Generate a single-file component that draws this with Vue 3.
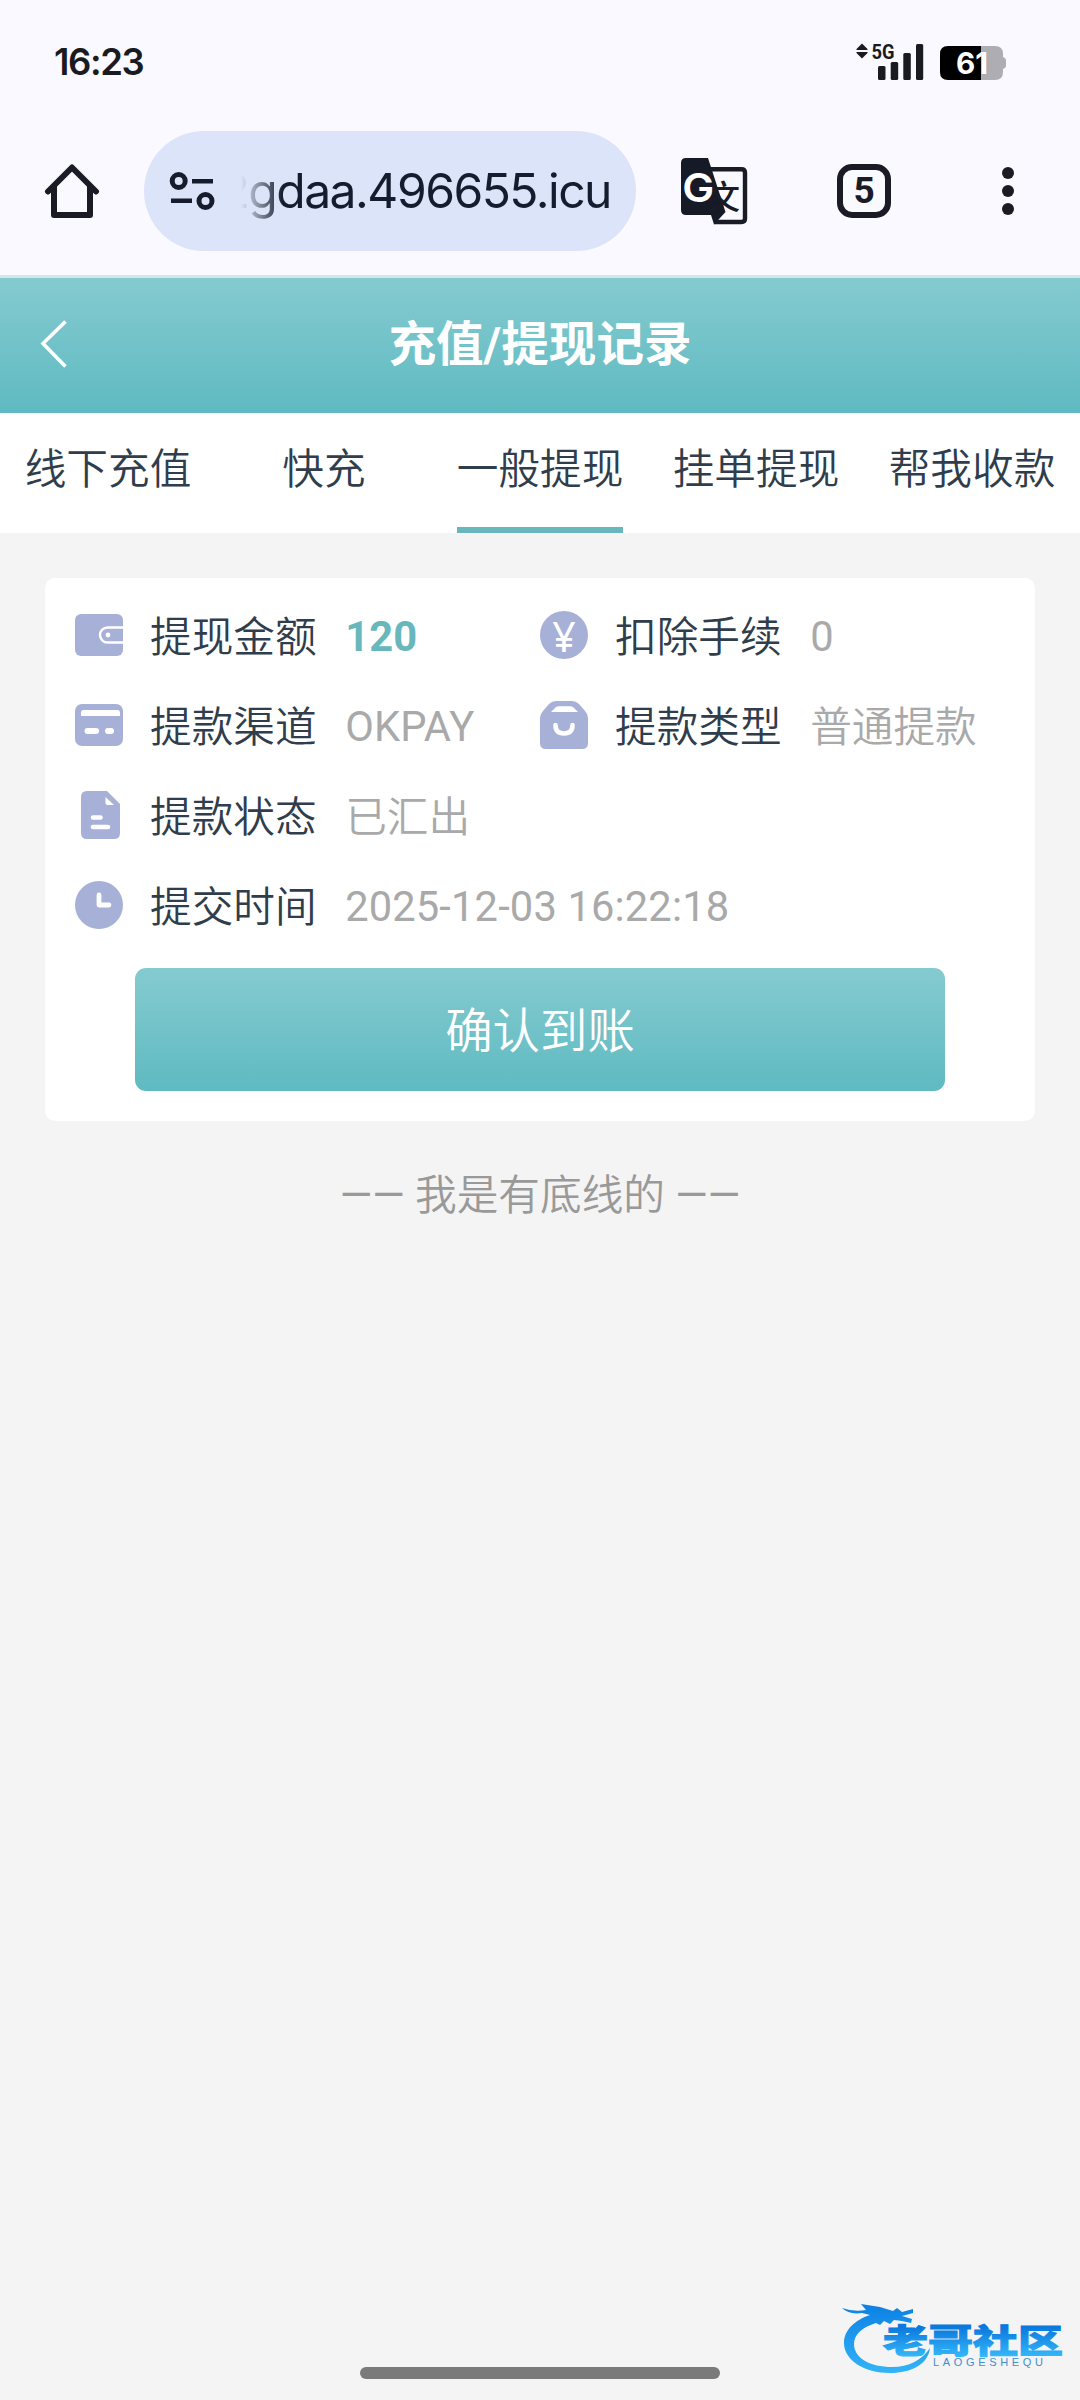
<script setup>
const tabs = ['线下充值', '快充', '一般提现', '挂单提现', '帮我收款']
const active = 2
const rows = [
  [
    { icon: 'wallet', label: '提现金额', value: '120', strong: true },
    { icon: 'yen', label: '扣除手续', value: '0' },
  ],
  [
    { icon: 'card', label: '提款渠道', value: 'OKPAY' },
    { icon: 'bag', label: '提款类型', value: '普通提款', cjk: true },
  ],
  [{ icon: 'doc', label: '提款状态', value: '已汇出', cjk: true }],
  [{ icon: 'clock', label: '提交时间', value: '2025-12-03 16:22:18' }],
]
</script>

<template>
  <div class="screen">
    <div class="status">
      <span class="time">16:23</span>
      <svg class="status-icons" width="152" height="40" viewBox="856 42 152 40">
        <path d="M862 43.500l5.500 5.500v1h-11v-1zM862 58.500l5.500-5.500v-1h-11v1z" fill="#1a1b1e" />
        <text x="871.500" y="58.800" class="net" textLength="23" lengthAdjust="spacingAndGlyphs">5G</text>
        <g fill="#1a1b1e">
          <rect x="878" y="66" width="7.500" height="14" rx="1.500" />
          <rect x="890.700" y="62" width="7.500" height="18" rx="1.500" />
          <rect x="903.300" y="53" width="7.500" height="27" rx="1.500" />
          <rect x="916" y="44" width="7.200" height="36" rx="1.500" />
        </g>
        <path d="M981 46h14q8 0 8 8v3q3 1 3 3v6q0 2-3 3v3q0 8-8 8h-14z" fill="#aeadb2" />
        <path d="M981 46h-33q-8 0-8 8v18q0 8 8 8h33z" fill="#000" />
        <text x="956" y="74.300" class="pct" textLength="32" lengthAdjust="spacingAndGlyphs">61</text>
      </svg>
    </div>

    <div class="browser">
      <svg class="home" width="56" height="56" viewBox="44 163 56 56" fill="none" stroke="#1a1b24" stroke-width="6" stroke-linejoin="round" stroke-linecap="round">
        <path d="M48 191.500L72 167.500L96 191.500" />
        <path d="M54 187V215H90V187" />
      </svg>
      <div class="omnibox">
        <svg width="46" height="40" viewBox="169 171 46 40" fill="none" stroke="#161c2c" stroke-width="5">
          <circle cx="178.700" cy="181" r="6.500" />
          <circle cx="205.500" cy="201" r="6.500" />
          <path d="M192 181.300h21M171 200.700h21" stroke-width="4.600" />
        </svg>
        <div class="url"><span>2gdaa.496655.icu</span></div>
      </div>
      <svg class="translate" width="68" height="68" viewBox="680 157 68 68">
        <path d="M709 169.200H741.500Q745 169.200 745 172.700V218.500Q745 222 741.500 222H714" fill="none" stroke="#1a1b24" stroke-width="4.400" />
        <path d="M686 158H708L725.500 212L714 224.500L711 215H686Q681 215 681 210V163Q681 158 686 158Z" fill="#161a27" />
        <text x="707" y="209" class="wen">文</text>
        <text x="682.300" y="202.300" class="gee" textLength="32" lengthAdjust="spacingAndGlyphs">G</text>
      </svg>
      <div class="tabcount">5</div>
      <div class="dots"><i /><i /><i /></div>
    </div>

    <header class="header">
      <svg class="back" width="30" height="52" viewBox="39 318 30 52" fill="none" stroke="#fff" stroke-width="3.600">
        <path d="M65.500 321.500L43 343.500L65.500 366.500" />
      </svg>
      <h1>充值/提现记录</h1>
    </header>

    <nav class="tabs">
      <div v-for="(t, i) in tabs" :key="t" class="tab">
        <span :class="{ on: i === active }">{{ t }}</span>
      </div>
    </nav>

    <section class="card">
      <div v-for="(row, r) in rows" :key="r" class="row">
        <div v-for="c in row" :key="c.label" class="cell">
          <svg width="48" height="48" viewBox="0 0 48 48" fill="#a7b1d7">
            <template v-if="c.icon === 'wallet'">
              <rect y="3" width="48" height="42" rx="6" />
              <path d="M48 16.500H32.500a7.500 7.500 0 0 0 0 15H48" fill="none" stroke="#fff" stroke-width="2.400" />
              <circle cx="33" cy="24" r="2.400" fill="#fff" />
            </template>
            <template v-else-if="c.icon === 'yen'">
              <circle cx="24" cy="24" r="24" />
              <text x="24" y="41" text-anchor="middle" class="yen">¥</text>
            </template>
            <template v-else-if="c.icon === 'card'">
              <rect y="3" width="48" height="42" rx="7" />
              <path d="M6 15v-3.500q0-2.500 2.500-2.500h34q2.500 0 2.500 2.500V15z" fill="#fff" />
              <path d="M12.500 30h8.500M33 30h3" stroke="#fff" stroke-width="6" stroke-linecap="round" />
            </template>
            <template v-else-if="c.icon === 'bag'">
              <path d="M0 17Q0 13 3 10L9 3Q12 0 16 0H32Q36 0 39 3L45 10Q48 13 48 17V42Q48 48 42 48H6Q0 48 0 42Z" />
              <path d="M11 11L15.500 6.500Q17 5.200 19 5.200H30Q32 5.200 33.500 6.500L38 11Z" fill="#fff" />
              <path d="M15.500 24q0 8.500 8.500 8.500t8.500-8.500" fill="none" stroke="#fff" stroke-width="4.500" stroke-linecap="round" />
            </template>
            <template v-else-if="c.icon === 'doc'">
              <path d="M12 0H32L45 13V42Q45 48 39 48H12Q6 48 6 42V6Q6 0 12 0Z" />
              <path d="M30.500 6L39 14H32.500Q30.500 14 30.500 12Z" fill="#fff" />
              <path d="M18 26.500h7.500M18 36h15" stroke="#fff" stroke-width="4.600" stroke-linecap="round" />
            </template>
            <template v-else>
              <circle cx="24" cy="24" r="24" />
              <path d="M24 14V24H34" fill="none" stroke="#fff" stroke-width="4.800" stroke-linecap="round" stroke-linejoin="round" />
            </template>
          </svg>
          <span class="label">{{ c.label }}</span>
          <span class="value" :class="{ strong: c.strong, cjk: c.cjk }">{{ c.value }}</span>
        </div>
      </div>
      <button class="confirm">确认到账</button>
    </section>

    <p class="end"><span class="dash">——</span> 我是有底线的 <span class="dash">——</span></p>

    <div class="handle" />

    <svg class="brand" width="226" height="76" viewBox="840 2300 226 76">
      <defs>
        <linearGradient id="blue" x1="0" y1="0" x2="0" y2="1">
          <stop offset="0" stop-color="#0c80e4" />
          <stop offset="1" stop-color="#33b4f8" />
        </linearGradient>
        <linearGradient id="blueText" gradientUnits="userSpaceOnUse" x1="0" y1="2327" x2="0" y2="2357">
          <stop offset="0" stop-color="#0a78dd" />
          <stop offset="1" stop-color="#35b8fa" />
        </linearGradient>
      </defs>
      <path d="M870 2315C855 2320 844 2330 844 2343C844 2360 864 2373 890 2373C912 2373 928 2364 930 2348C922 2360 909 2367 892 2367C870 2367 854 2358 854 2344C854 2334 863 2327 876 2323L880 2325L884 2321L890 2324L894 2320L902 2321L911 2323L912 2319L902 2316L913 2313V2309L902 2312L897 2308L893 2311L880 2307L861 2304L866 2310Q853 2312 842 2308Q849 2315 862 2313Z" fill="url(#blue)" />
      <text x="883" y="2353" class="brand-cn" textLength="180" lengthAdjust="spacingAndGlyphs" fill="url(#blueText)" stroke="url(#blueText)">老哥社区</text>
      <text x="933" y="2366" class="brand-en" textLength="110">LAOGESHEQU</text>
    </svg>
  </div>
</template>

<style>
body {
  margin: 0;
  background: #f4f4f4;
}
</style>

<style scoped>
.screen {
  position: relative;
  width: 1080px;
  height: 2400px;
  overflow: hidden;
  background: #f4f4f4;
  font-family: Roboto, 'Noto Sans CJK SC', sans-serif;
  font-size: 41.67px;
  color: #2f3d4c;
}
.status {
  display: flex;
  justify-content: space-between;
  box-sizing: border-box;
  height: 124px;
  padding: 42px 72px 0 54px;
  background: #f9f9ff;
}
.time {
  font: 600 36.500px/40px Inter, sans-serif;
  letter-spacing: -1.400px;
  color: #1a1b1e;
}
.net {
  font: 700 20px Roboto, sans-serif;
  fill: #1a1b1e;
}
.pct {
  font: 700 30px Inter, sans-serif;
  fill: #fff;
}
.browser {
  display: flex;
  align-items: center;
  box-sizing: border-box;
  height: 154px;
  padding: 0 66px 17px 44px;
  background: #f9f9ff;
  border-bottom: 3px solid #d3e6ee;
}
.omnibox {
  display: flex;
  align-items: center;
  box-sizing: border-box;
  width: 492px;
  height: 120px;
  margin-left: 44px;
  padding-left: 25px;
  border-radius: 60px;
  background: #dbe4f8;
}
.url {
  display: flex;
  justify-content: flex-end;
  width: 370px;
  margin-left: 26px;
  overflow: hidden;
  font: 400 48px/60px Inter, sans-serif;
  letter-spacing: -1.500px;
  color: #151c2d;
  -webkit-mask-image: linear-gradient(90deg, transparent, #000 42px);
  mask-image: linear-gradient(90deg, transparent, #000 42px);
}
.translate {
  margin-left: 44px;
}
.wen {
  font: 500 33px 'Noto Sans CJK SC', sans-serif;
  fill: #1a1b24;
}
.gee {
  font: 600 40px Inter, sans-serif;
  fill: #fff;
}
.tabcount {
  box-sizing: border-box;
  width: 54px;
  height: 54px;
  margin-left: 89px;
  border: 6px solid #1a1b24;
  border-radius: 15px;
  text-align: center;
  font: 700 37px/42px Roboto, sans-serif;
  color: #1a1b24;
}
.dots {
  display: flex;
  flex-direction: column;
  gap: 6px;
  margin-left: 111px;
}
.dots i {
  width: 12px;
  height: 12px;
  border-radius: 50%;
  background: #1a1b24;
}
.header {
  display: flex;
  align-items: center;
  height: 135px;
  padding: 0 39px;
  background: linear-gradient(#84cbd0, #5fbac1);
}
.back {
  margin-bottom: 3px;
}
.header h1 {
  flex: 1;
  margin: 0 30px 0 0;
  padding-bottom: 1px;
  text-align: center;
  font-size: 47.600px;
  line-height: 60px;
  font-weight: 700;
  color: #fff;
}
.tabs {
  display: flex;
  height: 120px;
  background: #fff;
}
.tab {
  flex: 1;
  display: flex;
  justify-content: center;
}
.tab span {
  box-sizing: border-box;
  height: 120px;
  line-height: 114px;
  font-weight: 350;
  white-space: nowrap;
}
.tab .on {
  border-bottom: 6px solid #68b7bc;
}
.card {
  box-sizing: border-box;
  width: 990px;
  height: 543px;
  margin: 45px auto 0;
  padding: 12px 30px 0;
  border-radius: 10px;
  background: #fff;
}
.row {
  display: flex;
  height: 90px;
}
.cell {
  display: flex;
  align-items: center;
  width: 465px;
  white-space: nowrap;
}
.cell svg {
  flex: none;
}
.label {
  margin-left: 27px;
  padding-bottom: 2px;
  font-weight: 350;
}
.value {
  margin-left: 28.500px;
  padding-top: 2px;
  letter-spacing: 0.150px;
  color: #a9a9a9;
}
.cjk {
  padding: 0 0 2px;
  letter-spacing: 0;
  font-weight: 350;
}
.strong {
  font-weight: 700;
  color: #68b7bc;
}
.yen {
  font: 400 41px 'Noto Sans', sans-serif;
  fill: #fff;
}
.confirm {
  display: block;
  width: 810px;
  height: 123px;
  margin: 18px auto 0;
  padding: 0 0 4px;
  border: 0;
  border-radius: 11px;
  background: linear-gradient(#84cbd0, #5fbac1);
  font: 350 47.400px Roboto, 'Noto Sans CJK SC', sans-serif;
  color: #fff;
}
.end {
  margin: 45px 0 0;
  text-align: center;
  line-height: 60px;
  font-weight: 350;
  color: #999;
}
.dash {
  font-weight: 400;
}
.handle {
  position: absolute;
  left: 360px;
  bottom: 21px;
  width: 360px;
  height: 12px;
  border-radius: 6px;
  background: #7a7a7a;
}
.brand {
  position: absolute;
  right: 14px;
  bottom: 24px;
}
.brand-cn {
  font: 900 33px 'Noto Sans CJK SC', sans-serif;
  stroke-width: 1;
}
.brand-en {
  font: 400 11px 'Liberation Sans', sans-serif;
  fill: #3d8fd0;
}
</style>
